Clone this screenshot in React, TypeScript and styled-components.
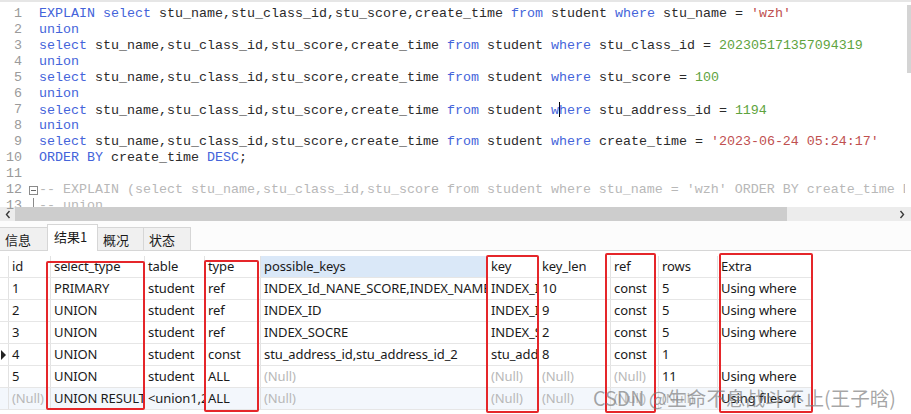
import React from "react";
import styled, { createGlobalStyle } from "styled-components";

const Global = createGlobalStyle`
  html, body { margin: 0; padding: 0; background: #fff; }
  body { width: 911px; height: 414px; overflow: hidden; }
`;

const Page = styled.div`
  position: relative;
  width: 911px;
  height: 414px;
  overflow: hidden;
  background: #fff;
  font-family: "Noto Sans", "Noto Sans CJK SC", sans-serif;
`;

/* ---------- editor ---------- */
const Editor = styled.div`
  display: flex;
  height: 207px;
  box-sizing: border-box;
  border-top: 2px solid #e6e6e6;
  font-family: "Liberation Mono", "Courier New", monospace;
  font-size: 13.333px;
  line-height: 16px;
`;

const Gutter = styled.div`
  flex: none;
  width: 39px;
  padding-top: 4px;
  color: #9a9a9a;
`;

const GutterLine = styled.div`
  display: flex;
  align-items: center;
  height: 16px;
`;

const LineNo = styled.span`
  width: 22px;
  text-align: right;
`;

const FoldBox = styled.span`
  position: relative;
  box-sizing: border-box;
  width: 9px;
  height: 9px;
  margin-left: 7px;
  border: 1px solid #8a8a8a;
  background: #fff;
  &::after {
    content: "";
    position: absolute;
    left: 1px;
    right: 1px;
    top: 3px;
    height: 1px;
    background: #666;
  }
`;

const FoldLine = styled.span`
  align-self: stretch;
  width: 1px;
  margin-left: 11px;
  background: #8a8a8a;
`;

const Code = styled.div`
  flex: 1;
  min-width: 0;
  overflow: hidden;
  padding-top: 4px;
  white-space: pre;
  color: #2b2b2b;
`;

const CodeLine = styled.div`
  height: 16px;
`;

type TokKind = "kw" | "str" | "num" | "cm" | "pl";
const tokColors: Record<TokKind, string> = {
  kw: "#4464da",
  str: "#c0504f",
  num: "#5ea33e",
  cm: "#b8b8b8",
  pl: "#2b2b2b",
};

const Tok = styled.span<{ $k: TokKind }>`
  color: ${(p) => tokColors[p.$k]};
`;

const Caret = styled.span`
  display: inline-block;
  width: 1px;
  height: 15px;
  margin-right: -1px;
  vertical-align: -3px;
  background: #000;
`;

const VScroll = styled.div`
  flex: none;
  width: 6px;
  padding-top: 3px;
  background: #fff;
`;

const VThumb = styled.div`
  width: 4px;
  margin-left: 2px;
  height: 68px;
  background: #d4d4d4;
`;

/* ---------- horizontal scrollbar ---------- */
const HScroll = styled.div`
  display: flex;
  height: 14px;
  background: #ececec;
`;

const Arrow = styled.div<{ $w: number }>`
  flex: none;
  width: ${(p) => p.$w}px;
  display: flex;
  align-items: center;
  justify-content: center;
`;

const Track = styled.div`
  flex: 1;
  display: flex;
`;

const HThumb = styled.div`
  width: 772px;
  background: #cdcdcd;
`;

/* ---------- tabs ---------- */
const TabBar = styled.div`
  display: flex;
  align-items: flex-end;
  height: 30px;
  box-sizing: border-box;
  border-bottom: 1px solid #d6d6d6;
  background: #fcfcfc;
  font-family: "Noto Sans CJK SC", "Noto Sans", sans-serif;
  font-size: 13px;
  color: #1a1a1a;
`;

const Tab = styled.div<{ $active?: boolean; $w: number; $first?: boolean }>`
  box-sizing: border-box;
  width: ${(p) => p.$w}px;
  height: ${(p) => (p.$active ? 27 : 23)}px;
  margin-bottom: ${(p) => (p.$active ? -1 : 0)}px;
  padding-left: ${(p) => (p.$active ? 6 : 5)}px;
  line-height: 24px;
  background: ${(p) => (p.$active ? "#fff" : "#f0f0f0")};
  border-top: 1px solid #d6d6d6;
  border-right: 1px solid #d6d6d6;
  border-left: ${(p) => (p.$first ? "none" : "1px solid #d6d6d6")};
  margin-left: ${(p) => (p.$first ? 0 : -1)}px;
  position: relative;
  z-index: ${(p) => (p.$active ? 1 : 0)};
`;

/* ---------- grid ---------- */
const Table = styled.div`
  width: 812px;
  padding-top: 5px;
  font-size: 13px;
`;

const Row = styled.div<{ $tint?: boolean }>`
  display: grid;
  grid-template-columns: 9px 42px 94px 60px 56px 227px 51px 72px 48px 59px 94px;
  height: 22px;
  box-sizing: border-box;
  border-bottom: 1px solid #e6e6e6;
  background: ${(p) => (p.$tint ? "#f3f7fc" : "#fff")};
`;

const Cell = styled.div<{ $null?: boolean; $hl?: boolean }>`
  box-sizing: border-box;
  padding-left: 3px;
  border-right: 1px solid #e2e2e2;
  overflow: hidden;
  white-space: nowrap;
  line-height: 21px;
  letter-spacing: -0.1px;
  color: ${(p) => (p.$null ? "#b8b8b8" : "#1a1a1a")};
  background: ${(p) => (p.$hl ? "#dae8f8" : "transparent")};
`;

const Indicator = styled.div`
  display: flex;
  align-items: center;
  justify-content: center;
  border-right: 1px solid #e2e2e2;
`;

const Pointer = styled.span`
  width: 0;
  height: 0;
  margin-left: -1px;
  border-left: 5px solid #222;
  border-top: 5px solid transparent;
  border-bottom: 5px solid transparent;
`;

/* ---------- overlays ---------- */
const RedBox = styled.div<{ $l: number; $t: number; $w: number; $h: number }>`
  position: absolute;
  left: ${(p) => p.$l}px;
  top: ${(p) => p.$t}px;
  width: ${(p) => p.$w}px;
  height: ${(p) => p.$h}px;
  box-sizing: border-box;
  border: 2px solid #e5262a;
  border-radius: 2px;
  pointer-events: none;
`;

const Watermark = styled.div`
  position: absolute;
  left: 593px;
  top: 385px;
  font-family: "Noto Sans CJK SC", "Noto Sans", sans-serif;
  font-size: 19.6px;
  line-height: 26px;
  color: rgba(120, 120, 120, 0.66);
  white-space: nowrap;
  pointer-events: none;
`;

/* ---------- data ---------- */
type T = [TokKind, string];
const SEL = " stu_name,stu_class_id,stu_score,create_time ";
const selectLine = (cond: T[]): T[] => [
  ["kw", "select"],
  ["pl", SEL],
  ["kw", "from"],
  ["pl", " student "],
  ["kw", "where"],
  ...cond,
];

const lines: (T[] | "caret7")[] = [
  [
    ["kw", "EXPLAIN"],
    ["pl", " "],
    ...selectLine([["pl", " stu_name = "], ["str", "'wzh'"]]),
  ],
  [["kw", "union"]],
  selectLine([["pl", " stu_class_id = "], ["num", "202305171357094319"]]),
  [["kw", "union"]],
  selectLine([["pl", " stu_score = "], ["num", "100"]]),
  [["kw", "union"]],
  "caret7",
  [["kw", "union"]],
  selectLine([["pl", " create_time = "], ["str", "'2023-06-24 05:24:17'"]]),
  [["kw", "ORDER BY"], ["pl", " create_time "], ["kw", "DESC"], ["pl", ";"]],
  [],
  [
    [
      "cm",
      "-- EXPLAIN (select stu_name,stu_class_id,stu_score from student where stu_name = 'wzh' ORDER BY create_time DESC)",
    ],
  ],
  [["cm", "-- union"]],
];

const N = "(Null)";
const columns = ["id", "select_type", "table", "type", "possible_keys", "key", "key_len", "ref", "rows", "Extra"];
const rows: string[][] = [
  ["1", "PRIMARY", "student", "ref", "INDEX_Id_NANE_SCORE,INDEX_NAME", "INDEX_Id_NANE_SCORE", "10", "const", "5", "Using where"],
  ["2", "UNION", "student", "ref", "INDEX_ID", "INDEX_ID", "9", "const", "5", "Using where"],
  ["3", "UNION", "student", "ref", "INDEX_SOCRE", "INDEX_SOCRE", "2", "const", "5", "Using where"],
  ["4", "UNION", "student", "const", "stu_address_id,stu_address_id_2", "stu_address_id", "8", "const", "1", ""],
  ["5", "UNION", "student", "ALL", N, N, N, N, "11", "Using where"],
  [N, "UNION RESULT", "<union1,2,3,4,5>", "ALL", N, N, N, N, N, "Using filesort"],
];

const Chevron: React.FC<{ dir: "l" | "r" }> = ({ dir }) => (
  <svg width="6" height="9" viewBox="0 0 6 9">
    <polyline
      points={dir === "l" ? "4.5,1 1.5,4.5 4.5,8" : "1.5,1 4.5,4.5 1.5,8"}
      fill="none"
      stroke="#3a3a3a"
      strokeWidth="1.4"
    />
  </svg>
);

export default function App() {
  return (
    <Page>
      <Global />
      <Editor>
        <Gutter>
          {lines.map((_, i) => (
            <GutterLine key={i}>
              <LineNo>{i + 1}</LineNo>
              {i === 11 && <FoldBox />}
              {i === 12 && <FoldLine />}
            </GutterLine>
          ))}
        </Gutter>
        <Code>
          {lines.map((ln, i) =>
            ln === "caret7" ? (
              <CodeLine key={i}>
                <Tok $k="kw">select</Tok>
                <Tok $k="pl">{SEL}</Tok>
                <Tok $k="kw">from</Tok>
                <Tok $k="pl"> student </Tok>
                <Tok $k="kw">w</Tok>
                <Caret />
                <Tok $k="kw">here</Tok>
                <Tok $k="pl"> stu_address_id = </Tok>
                <Tok $k="num">1194</Tok>
              </CodeLine>
            ) : (
              <CodeLine key={i}>
                {ln.map(([k, s], j) => (
                  <Tok key={j} $k={k}>
                    {s}
                  </Tok>
                ))}
              </CodeLine>
            )
          )}
        </Code>
        <VScroll>
          <VThumb />
        </VScroll>
      </Editor>

      <HScroll>
        <Arrow $w={15}>
          <Chevron dir="l" />
        </Arrow>
        <Track>
          <HThumb />
        </Track>
        <Arrow $w={18}>
          <Chevron dir="r" />
        </Arrow>
      </HScroll>

      <TabBar>
        <Tab $w={48} $first>信息</Tab>
        <Tab $w={51} $active>结果1</Tab>
        <Tab $w={47}>概况</Tab>
        <Tab $w={48}>状态</Tab>
      </TabBar>

      <Table>
        <Row>
          <Indicator />
          {columns.map((c) => (
            <Cell key={c} $hl={c === "possible_keys"}>
              {c}
            </Cell>
          ))}
        </Row>
        {rows.map((r, i) => (
          <Row key={i} $tint={i === rows.length - 1}>
            <Indicator>{i === 3 && <Pointer />}</Indicator>
            {r.map((v, j) => (
              <Cell key={j} $null={v === N}>
                {v}
              </Cell>
            ))}
          </Row>
        ))}
      </Table>

      <RedBox $l={46} $t={261} $w={99} $h={149} />
      <RedBox $l={204} $t={260} $w={55} $h={152} />
      <RedBox $l={486} $t={255} $w={53} $h={158} />
      <RedBox $l={605} $t={253} $w={51} $h={160} />
      <RedBox $l={719} $t={253} $w={94} $h={160} />

      <Watermark>CSDN @生命不息战斗不止(王子晗)</Watermark>
    </Page>
  );
}
